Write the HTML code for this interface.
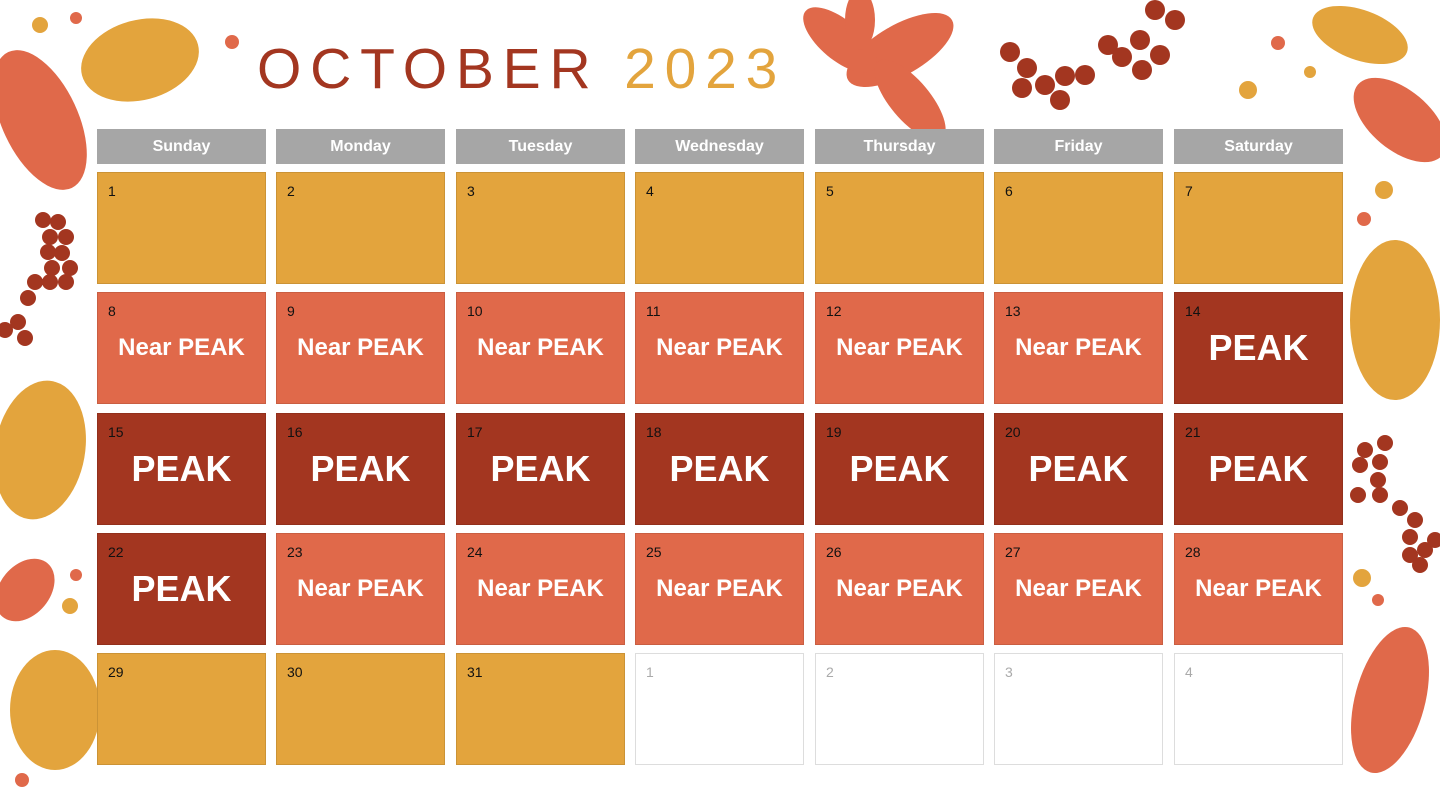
<!DOCTYPE html>
<html><head><meta charset="utf-8"><style>
body{margin:0;width:1440px;height:809px;overflow:hidden;background:#fff;position:relative;font-family:"Liberation Sans",sans-serif}
.t{position:absolute;left:257px;top:34px;font-size:57px;letter-spacing:8.8px;color:#A33620;white-space:nowrap;line-height:70px}
.t span{color:#E3A43D}
.c{position:absolute;width:169px;box-sizing:border-box;border:1px solid rgba(0,0,0,0.1)}
.h{height:35px;background:#A6A6A6;color:#fff;font-weight:bold;font-size:16px;text-align:center;line-height:36px;border:none}
.d{height:112px;font-size:14px;color:#111}
.d .n{position:absolute;left:10px;top:10px}
.o{background:#E3A43D}.r{background:#E0694A}.p{background:#A33620}.w{background:#fff;border-color:#ddd}.w .n{color:#aaa}
.l{position:absolute;left:0;right:0;top:41px;text-align:center;color:#fff;font-weight:bold;font-size:24px}
.pk{position:absolute;left:0;right:0;top:34px;text-align:center;color:#fff;font-weight:bold;font-size:36px}
svg{position:absolute;left:0;top:0}
</style></head><body>
<svg width="1440" height="809">
<g fill="#E0694A"><ellipse cx="40" cy="120" rx="38" ry="75" transform="rotate(-25 40 120)"/><ellipse cx="1400" cy="120" rx="30" ry="55" transform="rotate(-50 1400 120)"/><ellipse cx="25" cy="590" rx="25" ry="35" transform="rotate(40 25 590)"/><ellipse cx="1390" cy="700" rx="35" ry="75" transform="rotate(15 1390 700)"/><ellipse cx="900" cy="50" rx="25" ry="60" transform="rotate(60 900 50)"/><ellipse cx="840" cy="40" rx="20" ry="45" transform="rotate(-50 840 40)"/><ellipse cx="910" cy="100" rx="20" ry="50" transform="rotate(-40 910 100)"/><ellipse cx="860" cy="20" rx="15" ry="30"/></g>
<g fill="#E3A43D"><ellipse cx="140" cy="60" rx="60" ry="40" transform="rotate(-15 140 60)"/><ellipse cx="1360" cy="35" rx="50" ry="25" transform="rotate(20 1360 35)"/><ellipse cx="40" cy="450" rx="45" ry="70" transform="rotate(10 40 450)"/><ellipse cx="1395" cy="320" rx="45" ry="80"/><ellipse cx="55" cy="710" rx="45" ry="60"/><circle cx="40" cy="25" r="8"/><circle cx="1248" cy="90" r="9"/><circle cx="1384" cy="190" r="9"/><circle cx="70" cy="606" r="8"/><circle cx="1362" cy="578" r="9"/><circle cx="1310" cy="72" r="6"/></g>
<g fill="#A33620"><circle cx="1010" cy="52" r="10"/><circle cx="1027" cy="68" r="10"/><circle cx="1045" cy="85" r="10"/><circle cx="1060" cy="100" r="10"/><circle cx="1065" cy="76" r="10"/><circle cx="1085" cy="75" r="10"/><circle cx="1022" cy="88" r="10"/><circle cx="1108" cy="45" r="10"/><circle cx="1122" cy="57" r="10"/><circle cx="1140" cy="40" r="10"/><circle cx="1160" cy="55" r="10"/><circle cx="1155" cy="10" r="10"/><circle cx="1175" cy="20" r="10"/><circle cx="1142" cy="70" r="10"/><circle cx="43" cy="220" r="8"/><circle cx="58" cy="222" r="8"/><circle cx="50" cy="237" r="8"/><circle cx="66" cy="237" r="8"/><circle cx="48" cy="252" r="8"/><circle cx="62" cy="253" r="8"/><circle cx="52" cy="268" r="8"/><circle cx="70" cy="268" r="8"/><circle cx="35" cy="282" r="8"/><circle cx="50" cy="282" r="8"/><circle cx="66" cy="282" r="8"/><circle cx="28" cy="298" r="8"/><circle cx="18" cy="322" r="8"/><circle cx="5" cy="330" r="8"/><circle cx="25" cy="338" r="8"/><circle cx="1385" cy="443" r="8"/><circle cx="1365" cy="450" r="8"/><circle cx="1380" cy="462" r="8"/><circle cx="1360" cy="465" r="8"/><circle cx="1378" cy="480" r="8"/><circle cx="1358" cy="495" r="8"/><circle cx="1380" cy="495" r="8"/><circle cx="1400" cy="508" r="8"/><circle cx="1415" cy="520" r="8"/><circle cx="1410" cy="537" r="8"/><circle cx="1425" cy="550" r="8"/><circle cx="1410" cy="555" r="8"/><circle cx="1420" cy="565" r="8"/><circle cx="1435" cy="540" r="8"/></g>
<g fill="#E0694A"><circle cx="232" cy="42" r="7"/><circle cx="76" cy="18" r="6"/><circle cx="1278" cy="43" r="7"/><circle cx="1364" cy="219" r="7"/><circle cx="76" cy="575" r="6"/><circle cx="1378" cy="600" r="6"/><circle cx="22" cy="780" r="7"/></g>
</svg>
<div class="t">OCTOBER <span>2023</span></div>
<div id="g"></div>
<script>
var xs=[97,276,456,635,815,994,1174],ys=[172,292,413,533,653];
var days=["Sunday","Monday","Tuesday","Wednesday","Thursday","Friday","Saturday"];
var h="";
for(var i=0;i<7;i++)h+='<div class="c h" style="left:'+xs[i]+'px;top:129px">'+days[i]+'</div>';
for(var r=0;r<5;r++)for(var c=0;c<7;c++){
var n=r*7+c+1,cls,lab="";
if(n<=7||n>=29)cls="o";else if(n>=14&&n<=22){cls="p";lab='<div class="pk">PEAK</div>';}else{cls="r";lab='<div class="l">Near PEAK</div>';}
var num=n;if(n>31){num=n-31;cls="w";}
h+='<div class="c d '+cls+'" style="left:'+xs[c]+'px;top:'+ys[r]+'px"><span class="n">'+num+'</span>'+lab+'</div>';}
document.getElementById("g").innerHTML=h;
</script>
</body></html>
